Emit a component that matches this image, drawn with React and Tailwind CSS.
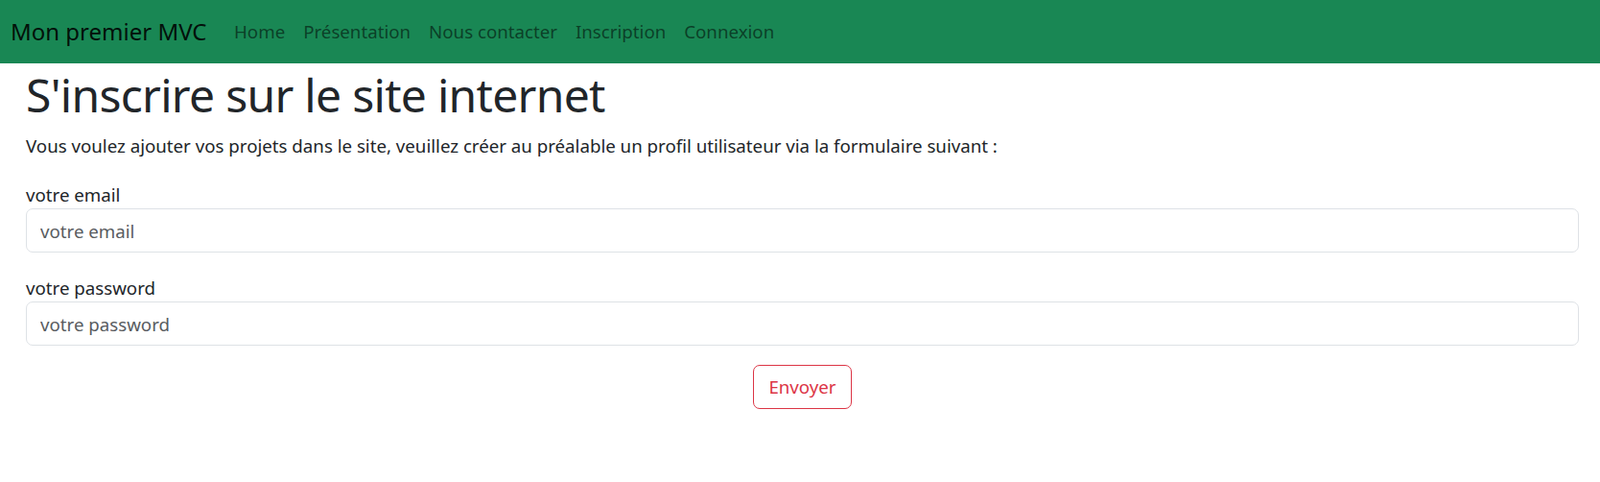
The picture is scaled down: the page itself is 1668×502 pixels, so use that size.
const links = ['Home', 'Présentation', 'Nous contacter', 'Inscription', 'Connexion'];

export default function App() {
  return (
    <div className="min-h-screen bg-white text-[#212529] font-['Noto_Sans',sans-serif]">
      <nav className="flex h-[66px] items-center bg-[#198754] pl-[11px]">
        <a href="#" className="mr-[19px] text-[24px] leading-[30px] text-black/90">Mon premier MVC</a>
        <ul className="flex">
          {links.map(l => (
            <li key={l}>
              <a href="#" className="block px-[9.5px] text-[18.7px] leading-[28px] text-black/55">{l}</a>
            </li>
          ))}
        </ul>
      </nav>

      <main className="pl-[27px] pr-[22px]">
        <h1 className="mt-[4px] text-[48px] font-normal leading-[57px] tracking-[-0.7px]">S'inscrire sur le site internet</h1>
        <p className="mt-[11px] text-[18.7px] leading-[28px]">
          Vous voulez ajouter vos projets dans le site, veuillez créer au préalable un profil utilisateur via la formulaire suivant :
        </p>

        <form className="mt-[23px]" onSubmit={e => e.preventDefault()}>
          <div>
            <label htmlFor="email" className="block text-[18.7px] leading-[28px]">votre email</label>
            <input id="email" type="email" placeholder="votre email"
              className="block h-[46px] w-full rounded-[7px] border border-[#dee2e6] px-[14px] text-[18.7px] placeholder:text-[#595c5f] focus:outline-none" />
          </div>
          <div className="mt-[23px]">
            <label htmlFor="password" className="block text-[18.7px] leading-[28px]">votre password</label>
            <input id="password" type="password" placeholder="votre password"
              className="block h-[46px] w-full rounded-[7px] border border-[#dee2e6] px-[14px] text-[18.7px] placeholder:text-[#595c5f] focus:outline-none" />
          </div>
          <div className="mt-[20px] flex justify-center">
            <button type="submit" className="h-[46px] rounded-[7px] border border-[#dc3545] px-[15px] text-[18.7px] text-[#dc3545]">
              Envoyer
            </button>
          </div>
        </form>
      </main>
    </div>
  );
}
